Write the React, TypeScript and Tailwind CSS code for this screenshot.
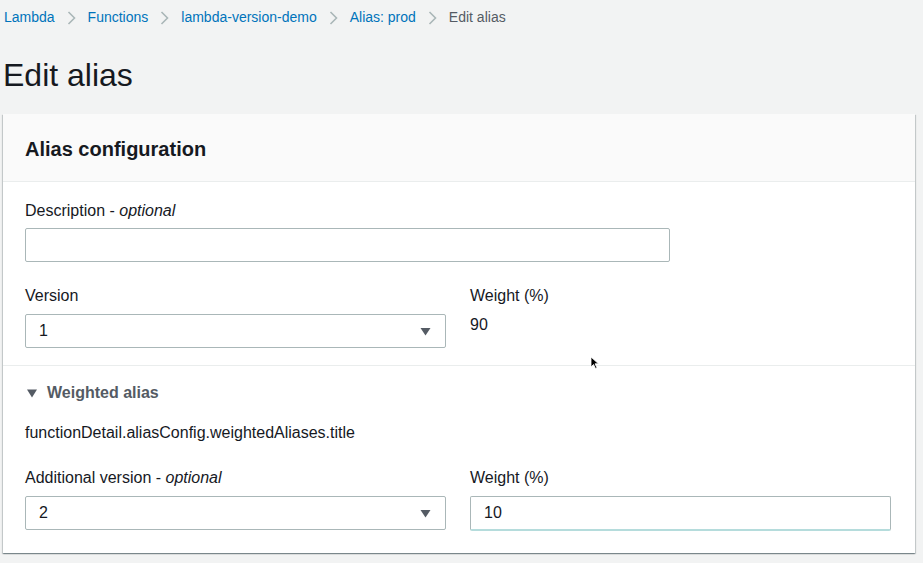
import { useState } from 'react';

const Chevron = () => (
  <svg width="11" height="16" viewBox="0 0 11 16" className="mx-[11px]">
    <path d="M2.5 2l6 6-6 6" fill="none" stroke="#aab7b8" strokeWidth="1.6" />
  </svg>
);

const Caret = () => (
  <svg width="11" height="9" viewBox="0 0 11 9">
    <path d="M0.5 1h10L5.5 8.5z" fill="#545b64" />
  </svg>
);

const SelectBox = ({ value }: { value: string }) => (
  <div className="flex h-[34px] items-center justify-between rounded-[2px] border border-[#aab7b8] bg-white pl-[13px] pr-[14px] text-[16px] text-[#16191f]">
    <span>{value}</span>
    <Caret />
  </div>
);

const Label = ({ text, optional }: { text: string; optional?: boolean }) => (
  <div className="h-[20px] text-[16px] leading-[20px] text-[#16191f]">
    {text}
    {optional && (
      <>
        {' - '}
        <i>optional</i>
      </>
    )}
  </div>
);

const App = () => {
  const [description, setDescription] = useState('');
  const [weight, setWeight] = useState('10');

  return (
    <div className="relative h-[563px] w-[923px] overflow-hidden bg-[#f2f3f3] font-['Liberation_Sans',Arial,sans-serif]">
      {/* Breadcrumbs */}
      <nav className="flex h-[35px] items-center pl-[4px] text-[14px]">
        <a className="text-[#0073bb]">Lambda</a>
        <Chevron />
        <a className="text-[#0073bb]">Functions</a>
        <Chevron />
        <a className="text-[#0073bb]">lambda-version-demo</a>
        <Chevron />
        <a className="text-[#0073bb]">Alias: prod</a>
        <Chevron />
        <span className="text-[#545b64]">Edit alias</span>
      </nav>

      <h1 className="mt-[22px] mb-[21px] h-[36px] pl-[3px] text-[32px] leading-[36px] font-normal text-[#16191f]">
        Edit alias
      </h1>

      {/* Panel */}
      <div className="ml-[3px] w-[912px] bg-white shadow-[0_1px_1px_0_rgba(0,28,36,0.3),1px_1px_1px_0_rgba(0,28,36,0.15),-1px_1px_1px_0_rgba(0,28,36,0.15)]">
        <div className="flex h-[68px] items-center border-b border-[#eaeded] bg-[#fafafa] pl-[22px]">
          <h2 className="pt-[2px] text-[20px] font-bold text-[#16191f]">Alias configuration</h2>
        </div>

        <div className="pt-[19px] pr-[24px] pl-[22px] pb-[17px]">
          <Label text="Description" optional />
          <input
            value={description}
            onChange={(e) => setDescription(e.target.value)}
            className="mt-[7px] block h-[34px] w-[645px] rounded-[2px] border border-[#aab7b8] bg-white px-[13px] text-[16px] outline-none"
          />

          <div className="mt-[24px] grid grid-cols-2 gap-x-[24px]">
            <div>
              <Label text="Version" />
              <div className="mt-[8px]">
                <SelectBox value="1" />
              </div>
            </div>
            <div>
              <Label text="Weight (%)" />
              <div className="mt-[9px] text-[16px] leading-[20px] text-[#16191f]">90</div>
            </div>
          </div>
        </div>

        <div className="border-t border-[#eaeded] pt-[17px] pr-[24px] pb-[22px] pl-[22px]">
          <div className="flex h-[20px] items-center gap-[10px] pl-[2px] text-[16px] font-bold text-[#545b64]">
            <svg width="10" height="9" viewBox="0 0 10 9">
              <path d="M0 0.5h10L5 8.5z" fill="#545b64" />
            </svg>
            Weighted alias
          </div>

          <div className="mt-[20px] text-[16px] leading-[20px] text-[#16191f]">
            functionDetail.aliasConfig.weightedAliases.title
          </div>

          <div className="mt-[25px] grid grid-cols-2 gap-x-[24px]">
            <div>
              <Label text="Additional version" optional />
              <div className="mt-[8px]">
                <SelectBox value="2" />
              </div>
            </div>
            <div>
              <Label text="Weight (%)" />
              <input
                value={weight}
                onChange={(e) => setWeight(e.target.value)}
                className="mt-[8px] block h-[35px] w-full rounded-[2px] border border-[#aab7b8] border-b-2 border-b-[#b5dcdc] bg-white px-[13px] text-[16px] text-[#16191f] outline-none"
              />
            </div>
          </div>
        </div>
      </div>

      {/* mouse pointer */}
      <svg className="absolute left-[590px] top-[356px]" width="10" height="14" viewBox="0 0 10 14">
        <path d="M1 1v10l2.5-2.5 2 4 1.5-.7-2-4H8.5z" fill="#000" stroke="#fff" strokeWidth="0.8" />
      </svg>
    </div>
  );
};

export default App;
